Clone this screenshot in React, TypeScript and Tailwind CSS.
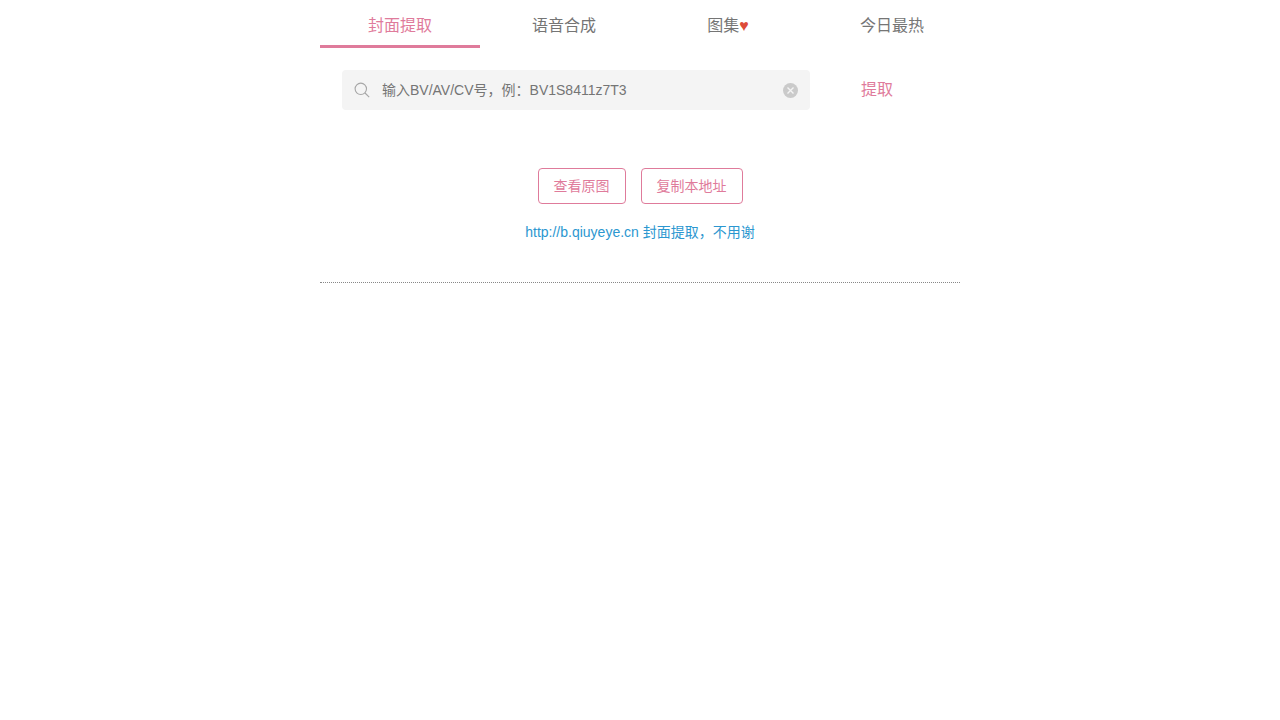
import { useState } from 'react';

const tabs = [
  { title: '封面提取', href: '#cover' },
  { title: '语音合成', href: '#voice' },
  { title: '图集', href: '#gallery', heart: true },
  { title: '今日最热', href: '#hot' },
];

function SearchIcon() {
  return (
    <svg className="w-4 h-4 shrink-0" viewBox="0 0 16 16" fill="none" stroke="#a6a6a6" strokeWidth="1.1" aria-hidden="true">
      <circle cx="6.8" cy="6.8" r="5.7" />
      <path d="M11 11l4.2 4.2" />
    </svg>
  );
}

function ClearIcon() {
  return (
    <svg className="w-4 h-4" viewBox="0 0 16 16" fill="none" aria-hidden="true">
      <circle cx="8.5" cy="8.5" r="7.5" fill="#cacaca" />
      <path d="M5.5 5.5l6 6M11.5 5.5l-6 6" stroke="#f4f4f4" strokeWidth="1.4" />
    </svg>
  );
}

export default function App() {
  const [active, setActive] = useState(0);
  const [keyword, setKeyword] = useState('');

  return (
    <div className="max-w-[640px] mx-auto font-['Liberation_Sans','Noto_Sans_CJK_SC',sans-serif] text-sm text-[#757575]">
      {/* Tabs */}
      <nav className="flex gap-1 text-base">
        {tabs.map((tab, index) => (
          <a
            key={tab.title}
            href={tab.href}
            onClick={() => setActive(index)}
            className={`w-1/4 h-12 shrink-0 text-center leading-[52px] ${
              index === active ? 'border-b-3 border-[#df7b9b] text-[#df7b9b]' : ''
            }`}
          >
            {tab.title}
            {tab.heart && <span className="text-[#dd4b39]">♥</span>}
          </a>
        ))}
      </nav>

      {/* Search */}
      <form className="flex items-center pt-[22px] pl-[22px]" onSubmit={(e) => e.preventDefault()}>
        <div className="flex items-center flex-1 h-10 px-3 gap-3 rounded bg-[#f4f4f4]">
          <SearchIcon />
          <input
            type="text"
            aria-label="BV/AV/CV号"
            value={keyword}
            onChange={(e) => setKeyword(e.target.value)}
            placeholder="输入BV/AV/CV号，例：BV1S8411z7T3"
            className="flex-1 min-w-0 h-10 outline-none placeholder:text-[#757575]"
          />
          <button type="button" aria-label="清空" onClick={() => setKeyword('')}>
            <ClearIcon />
          </button>
        </div>
        <button type="submit" className="w-[150px] h-10 pr-4 text-base text-[#df7b9b]">
          提取
        </button>
      </form>

      {/* Result */}
      <div className="flex justify-center gap-[15px] mt-[58px]">
        <button type="button" className="h-9 px-[15px] rounded border border-[#df7b9b] text-[#df7b9b]">
          查看原图
        </button>
        <button type="button" className="h-9 px-[15px] rounded border border-[#df7b9b] text-[#df7b9b]">
          复制本地址
        </button>
      </div>
      <p className="mt-[18px] text-center text-[#2c97d0]">
        <a href="#cover">http://b.qiuyeye.cn 封面提取，不用谢</a>
      </p>
      <hr className="mt-10 border-t border-dotted border-[#888888]" />
    </div>
  );
}
